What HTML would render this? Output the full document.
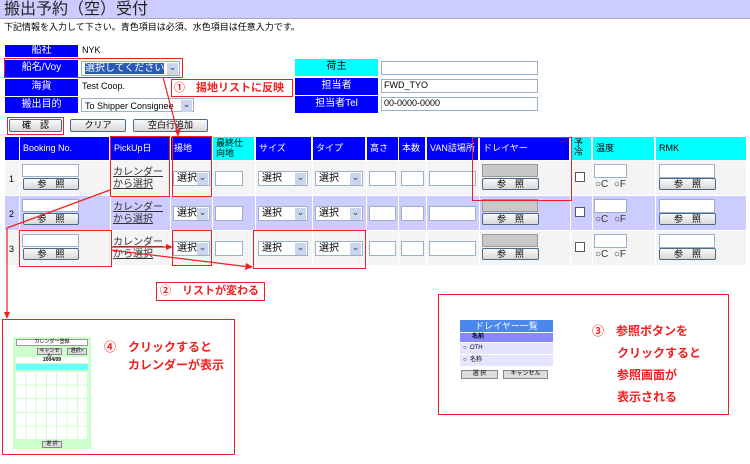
<!DOCTYPE html>
<html><head><meta charset="utf-8"><style>
*{box-sizing:border-box;margin:0;padding:0}
body{width:750px;height:464px;position:relative;background:#fff;font-family:"Liberation Sans","Noto Sans CJK JP",sans-serif;overflow:hidden;color:#000}
.a{position:absolute}
.lb{position:absolute;background:#0000ff;color:#fff;font-size:10px;text-align:center;line-height:16px}
.cy{background:#00ffff;color:#000}
.in{position:absolute;background:#fff;border:1px solid #9db0c8}
.btn{position:absolute;background:linear-gradient(#fafafa,#d8d8d8);border:1px solid #4a6a8a;border-radius:2px;font-size:9px;text-align:center;line-height:11px;color:#000}
.sel{position:absolute;background:#fff;border:1px solid #9db0c8;font-size:10px;line-height:14px;padding-left:3px}
.sel:after{content:"⌄";position:absolute;right:1px;top:1px;width:11px;height:12px;background:#c9d6ee;font-size:9px;line-height:8px;text-align:center;color:#335}
.th{position:absolute;top:137px;height:23px;background:#0000ff;color:#fff;font-size:9px;line-height:23px;padding-left:3px}
.rb{position:absolute;border:1.5px solid #f02020}
.rt{position:absolute;color:#f02020;font-size:12px;font-weight:bold}
.lk{position:absolute;font-size:10px;line-height:12px;text-decoration:underline;color:#333}
.cb{position:absolute;width:10px;height:10px;border:1px solid #556;background:#fff}
.rd{font-size:10px;position:absolute;color:#333}
</style></head><body>
<div class="a" style="left:0;top:0;width:750px;height:19px;background:#ccccff;border-bottom:1px solid #aab"></div>
<div class="a" style="left:4px;top:0;font-size:16px;line-height:19px;color:#222">搬出予約（空）受付</div>
<div class="a" style="left:4px;top:21px;font-size:9px;line-height:12px">下記情報を入力して下さい。青色項目は必須、水色項目は任意入力です。</div>

<div class="lb" style="left:5px;top:45px;width:73px;height:12px;line-height:12px">船社</div>
<div class="a" style="left:82px;top:45px;font-size:9px">NYK</div>
<div class="lb" style="left:5px;top:60px;width:73px;height:17px">船名/Voy</div>
<div class="sel" style="left:81px;top:61px;width:99px;height:15px"><span style="background:#2a5ab8;color:#fff">選択してください</span></div>
<div class="lb" style="left:5px;top:79px;width:73px;height:17px">海貨</div>
<div class="a" style="left:82px;top:81px;font-size:9px">Test Coop.</div>
<div class="lb" style="left:5px;top:97px;width:73px;height:16px">搬出目的</div>
<div class="sel" style="left:81px;top:98px;width:113px;height:14px;font-size:9px">To Shipper Consignee</div>

<div class="lb cy" style="left:295px;top:59px;width:83px;height:17px">荷主</div>
<div class="in" style="left:381px;top:61px;width:157px;height:14px"></div>
<div class="lb" style="left:295px;top:78px;width:83px;height:17px">担当者</div>
<div class="in" style="left:381px;top:79px;width:157px;height:14px;font-size:9px;padding-left:2px">FWD_TYO</div>
<div class="lb" style="left:295px;top:96px;width:83px;height:17px">担当者Tel</div>
<div class="in" style="left:381px;top:97px;width:157px;height:14px;font-size:9px;padding-left:2px">00-0000-0000</div>

<div class="btn" style="left:9px;top:119px;width:53px;height:13px">確　認</div>
<div class="btn" style="left:70px;top:119px;width:56px;height:13px">クリア</div>
<div class="btn" style="left:133px;top:119px;width:75px;height:13px">空白行追加</div>

<div class="th" style="left:5px;width:14px"></div>
<div class="th" style="left:20px;width:89px">Booking No.</div>
<div class="th" style="left:111px;width:58px">PickUp日</div>
<div class="th" style="left:171px;width:40px">揚地</div>
<div class="th" style="left:213px;width:41px;background:#00ffff;color:#000;line-height:10px;padding-top:1px">最終仕<br>向地</div>
<div class="th" style="left:256px;width:55px">サイズ</div>
<div class="th" style="left:313px;width:52px">タイプ</div>
<div class="th" style="left:367px;width:31px">高さ</div>
<div class="th" style="left:399px;width:26px">本数</div>
<div class="th" style="left:427px;width:51px">VAN詰場所</div>
<div class="th" style="left:480px;width:89px">ドレイヤー</div>
<div class="th" style="left:571px;width:20px;background:#00ffff;color:#000;line-height:9px;padding-top:2px">予<br>冷</div>
<div class="th" style="left:593px;width:61px;background:#00ffff;color:#000">温度</div>
<div class="th" style="left:656px;width:90px;background:#00ffff;color:#000">RMK</div>

<div id="rows"></div>
<script>
var h='';var tops=[161,196,231];var bg=['#f4f4f4','#ccccff','#f4f4f4'];
for(var i=0;i<3;i++){var t=tops[i];
h+='<div class="a" style="left:5px;top:'+t+'px;width:741px;height:34px;background:'+bg[i]+'"></div>';
[19,110,170,212,255,312,366,398,426,479,570,592,655].forEach(function(x){h+='<div class="a" style="left:'+x+'px;top:'+t+'px;width:1px;height:34px;background:#fff"></div>'});
h+='<div class="a" style="left:9px;top:'+(t+13)+'px;font-size:9px">'+(i+1)+'</div>';
h+='<div class="in" style="left:22px;top:'+(t+3)+'px;width:57px;height:13px"></div>';
h+='<div class="btn" style="left:23px;top:'+(t+17)+'px;width:56px;height:12px">参　照</div>';
h+='<div class="lk" style="left:113px;top:'+(t+6)+'px">カレンダー<br>から選択</div>';
h+='<div class="sel" style="left:173px;top:'+(t+10)+'px;width:37px;height:15px">選択</div>';
h+='<div class="in" style="left:215px;top:'+(t+10)+'px;width:28px;height:15px"></div>';
h+='<div class="sel" style="left:258px;top:'+(t+10)+'px;width:50px;height:15px">選択</div>';
h+='<div class="sel" style="left:315px;top:'+(t+10)+'px;width:48px;height:15px">選択</div>';
h+='<div class="in" style="left:369px;top:'+(t+10)+'px;width:27px;height:15px"></div>';
h+='<div class="in" style="left:401px;top:'+(t+10)+'px;width:23px;height:15px"></div>';
h+='<div class="in" style="left:429px;top:'+(t+10)+'px;width:47px;height:15px"></div>';
h+='<div class="a" style="left:482px;top:'+(t+3)+'px;width:56px;height:13px;background:#c8c8c8;border:1px solid #999"></div>';
h+='<div class="btn" style="left:482px;top:'+(t+17)+'px;width:57px;height:12px">参　照</div>';
h+='<div class="cb" style="left:575px;top:'+(t+11)+'px"></div>';
h+='<div class="in" style="left:594px;top:'+(t+3)+'px;width:33px;height:14px"></div>';
h+='<div class="rd" style="left:595px;top:'+(t+18)+'px">○C&nbsp;&nbsp;○F</div>';
h+='<div class="in" style="left:659px;top:'+(t+3)+'px;width:56px;height:14px"></div>';
h+='<div class="btn" style="left:659px;top:'+(t+17)+'px;width:57px;height:12px">参　照</div>';
}
document.getElementById('rows').innerHTML=h;
</script>

<div class="rb" style="left:4px;top:58px;width:179px;height:20px"></div>
<div class="rb" style="left:171px;top:79px;width:122px;height:18px"></div>
<div class="rt" style="left:174px;top:80px;line-height:16px;font-size:11px">①　揚地リストに反映</div>
<div class="rb" style="left:7px;top:117px;width:57px;height:18px"></div>
<div class="rb" style="left:110px;top:136px;width:60px;height:61px"></div>
<div class="rb" style="left:172px;top:136px;width:40px;height:61px"></div>
<div class="rb" style="left:472px;top:137px;width:100px;height:64px"></div>
<div class="rb" style="left:19px;top:230px;width:93px;height:37px"></div>
<div class="rb" style="left:172px;top:230px;width:40px;height:36px"></div>
<div class="rb" style="left:253px;top:230px;width:113px;height:39px"></div>
<div class="rb" style="left:156px;top:282px;width:109px;height:19px"></div>
<div class="rt" style="left:160px;top:283px;line-height:16px;font-size:11px">②　リストが変わる</div>

<svg class="a" style="left:0;top:0" width="750" height="464">
<g stroke="#f02020" stroke-width="1.2" fill="none">
<line x1="163" y1="77" x2="178" y2="134"/>
<line x1="110" y1="190" x2="7" y2="228"/>
<line x1="7" y1="228" x2="7" y2="316"/>
<line x1="111" y1="247" x2="170" y2="247"/>
<line x1="111" y1="250" x2="250" y2="267"/>
</g>
<g fill="#f02020">
<polygon points="178,137 175,130 181,129"/>
<polygon points="7,319 4,312 10,312"/>
<polygon points="173,247 166,244 166,250"/>
<polygon points="253,267 246,263 245,270"/>
</g>
</svg>

<div class="rb" style="left:2px;top:319px;width:233px;height:136px"></div>
<div class="a" style="left:13px;top:337px;width:78px;height:112px;background:#ccffcc"></div>
<div class="a" style="left:16px;top:339px;width:72px;height:7px;background:#fff;border:1px solid #999;font-size:5px;line-height:5px;text-align:center">カレンダー登録</div>
<div class="a" style="left:37px;top:348px;width:25px;height:7px;background:#ddd;border:1px solid #888;font-size:5px;line-height:5px;text-align:center">キャンセル</div>
<div class="a" style="left:67px;top:348px;width:20px;height:7px;background:#ddd;border:1px solid #888;font-size:5px;line-height:5px;text-align:center">選択&gt;</div>
<div class="a" style="left:16px;top:357px;width:72px;height:6px;background:#fff;font-size:5px;line-height:6px;text-align:center;font-weight:bold">2004/09</div>
<div class="a" style="left:16px;top:364px;width:72px;height:6px;background:#66ffff"></div>
<div class="a" style="left:16px;top:371px;width:72px;height:68px;background:#fff"></div>
<div class="a" style="left:16px;top:371px;width:72px;height:68px;background:repeating-linear-gradient(90deg,transparent 0 9.3px,#ccffcc 9.3px 10.3px),repeating-linear-gradient(0deg,transparent 0 12.6px,#ccffcc 12.6px 13.6px)"></div>
<div class="a" style="left:42px;top:441px;width:20px;height:7px;background:#ddd;border:1px solid #888;font-size:5px;line-height:5px;text-align:center">選 択</div>
<div class="rt" style="left:104px;top:338px;line-height:18px">④　クリックすると</div>
<div class="rt" style="left:128px;top:356px;line-height:18px">カレンダーが表示</div>

<div class="rb" style="left:438px;top:294px;width:291px;height:121px"></div>
<div class="a" style="left:460px;top:320px;width:93px;height:12px;background:#4a88ee;color:#fff;font-size:9px;line-height:12px;text-align:center">ドレイヤー一覧</div>
<div class="a" style="left:460px;top:333px;width:93px;height:9px;background:#8888ff"></div>
<div class="a" style="left:472px;top:333px;font-size:6px;line-height:9px;font-weight:bold">名前</div>
<div class="a" style="left:460px;top:343px;width:93px;height:11px;background:#e4e4ff;font-size:6px;line-height:11px;padding-left:3px">○ &nbsp;OTH</div>
<div class="a" style="left:460px;top:355px;width:93px;height:11px;background:#e4e4ff;font-size:6px;line-height:11px;padding-left:3px">○ &nbsp;名称</div>
<div class="a" style="left:461px;top:370px;width:37px;height:9px;background:#ddd;border:1px solid #888;font-size:6px;line-height:7px;text-align:center">選 択</div>
<div class="a" style="left:503px;top:370px;width:45px;height:9px;background:#ddd;border:1px solid #888;font-size:6px;line-height:7px;text-align:center">キャンセル</div>
<div class="rt" style="left:592px;top:322px;line-height:18px">③　参照ボタンを</div>
<div class="rt" style="left:617px;top:344px;line-height:18px">クリックすると</div>
<div class="rt" style="left:617px;top:366px;line-height:18px">参照画面が</div>
<div class="rt" style="left:617px;top:388px;line-height:18px">表示される</div>
</body></html>
